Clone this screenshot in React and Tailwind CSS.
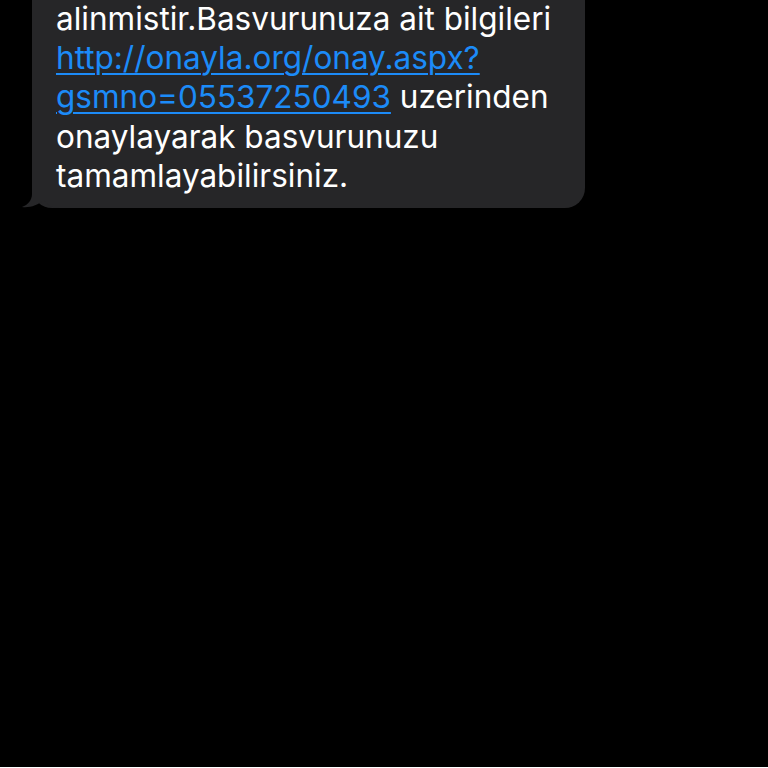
export default function App() {
  return (
    <div className="min-h-[768px] w-[768px] bg-black" style={{ fontFamily: "Inter, 'Liberation Sans', sans-serif" }}>
      <div className="relative ml-[32px] w-[553px] rounded-b-[20px] bg-[#262628] pb-[13px] pl-[24px] pr-4">
        {/* tail */}
        <svg className="absolute bottom-0 left-[-11px]" width="38" height="24" viewBox="0 0 38 24">
          <path d="M11 0 L11 10 C11 16 7 21 1 23 C8 24 17 21.5 23 16 C26 21 31 24 38 24 L38 0 Z" fill="#262628" />
        </svg>
        <p className="relative -mt-[1px] text-[31.5px] leading-[39.2px] text-white">
          alinmistir.Basvurunuza ait bilgileri{" "}
          <span className="text-[#1c8bf8] underline decoration-[2px] underline-offset-[4px]">http://onayla.org/onay.aspx?</span>
          <br />
          <span className="text-[#1c8bf8] underline decoration-[2px] underline-offset-[4px]">gsmno=05537250493</span> uzerinden
          <br />
          onaylayarak basvurunuzu
          <br />
          tamamlayabilirsiniz.
        </p>
      </div>
    </div>
  );
}
